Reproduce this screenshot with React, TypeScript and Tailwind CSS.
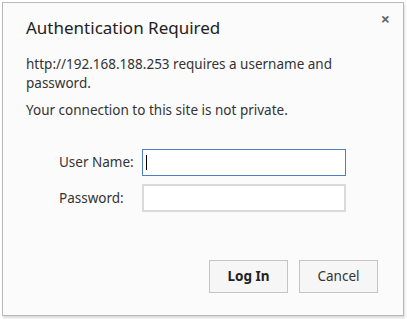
const App = () => {
  return (
    <div className="w-[407px] h-[319px] bg-white pl-[2px] pt-[2px]" style={{ fontFamily: '"Noto Sans", "Segoe UI", sans-serif' }}>
      <div className="relative w-[402px] h-[314px] bg-[#fbfbfb] border border-[#b9b9b9] shadow-[1px_2px_2px_rgba(0,0,0,0.15)] flex flex-col">
        <button className="absolute right-[13px] top-[8px] text-[#666] text-[16px] font-bold leading-none">×</button>
        <h1 className="pl-[23px] pt-[14px] text-[17px] leading-[22px] text-[#222]">Authentication Required</h1>
        <p className="pl-[23px] pr-[30px] mt-[16px] text-[13.5px] leading-[19px] text-[#333]">
          http://192.168.188.253 requires a username and password.
        </p>
        <p className="pl-[23px] mt-[8px] text-[13.5px] leading-[19px] text-[#333]">Your connection to this site is not private.</p>
        <div className="mt-[29px] grid grid-cols-[83px_204px] gap-y-[8px] items-center pl-[56px]">
          <label className="text-[13.5px] text-[#333]">User Name:</label>
          <div className="h-[27px] border border-[#4d7ec3] bg-white flex items-center pl-[3px]">
            <span className="w-px h-[15px] bg-black" />
          </div>
          <label className="text-[13.5px] text-[#333]">Password:</label>
          <div className="h-[28px] border-2 border-[#dadada] bg-white" />
        </div>
        <div className="mt-auto mb-[22px] flex justify-end gap-[11px] pr-[25px]">
          <button className="w-[79px] h-[33px] border border-[#c4c4c4] bg-[#f6f6f6] text-[13.5px] font-bold text-[#222]">Log In</button>
          <button className="w-[79px] h-[33px] border border-[#c4c4c4] bg-[#f6f6f6] text-[13.5px] text-[#333]">Cancel</button>
        </div>
      </div>
    </div>
  );
};
export default App;
